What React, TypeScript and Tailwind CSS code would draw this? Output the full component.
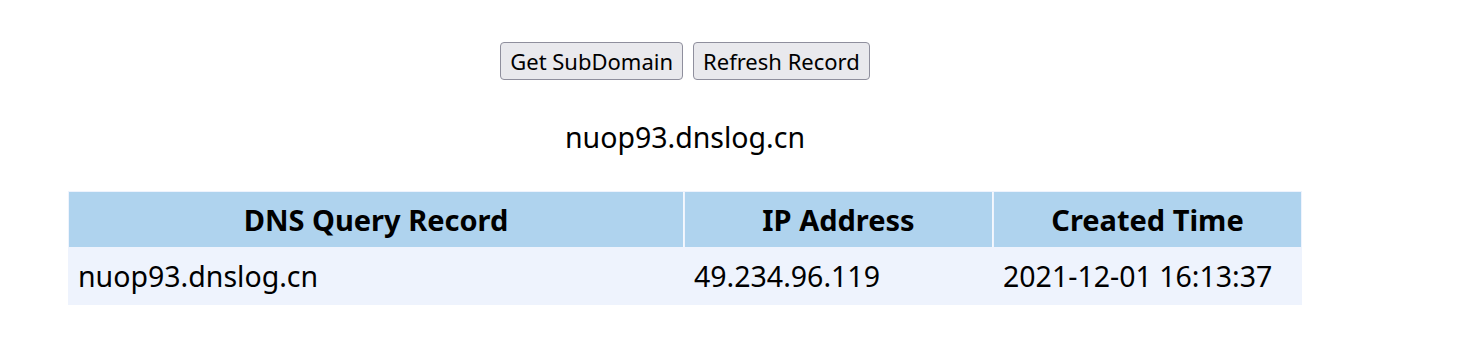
import React from "react";

export default function App() {
  const font = { fontFamily: '"Noto Sans", "Open Sans", sans-serif' };
  return (
    <div className="w-[1370px] bg-white text-black" style={font}>
      <div className="flex justify-center gap-[10px] pt-[42px]">
        <button className="h-[38px] px-[9px] rounded-[4px] border border-[#8f8f9d] bg-[#e9e9ed] text-[22px] leading-none text-black">
          Get SubDomain
        </button>
        <button className="h-[38px] px-[9px] rounded-[4px] border border-[#8f8f9d] bg-[#e9e9ed] text-[22px] leading-none text-black">
          Refresh Record
        </button>
      </div>
      <div className="mt-[37px] text-center text-[28.5px] leading-[40px]">nuop93.dnslog.cn</div>
      <div className="flex justify-center mt-[34px]">
        <table className="w-[1234px] border-separate border-spacing-[1px] bg-[#eef3fd] text-[28.5px]">
          <thead>
            <tr>
              <th className="h-[55px] bg-[#afd3ee] font-bold text-[29px] w-[615px] border-r border-[#f4f8fd]">DNS Query Record</th>
              <th className="h-[55px] bg-[#afd3ee] font-bold text-[29px] w-[308px] border-r border-[#f4f8fd]">IP Address</th>
              <th className="h-[55px] bg-[#afd3ee] font-bold text-[29px]">Created Time</th>
            </tr>
          </thead>
          <tbody>
            <tr>
              <td className="h-[56px] px-[9px] text-left">nuop93.dnslog.cn</td>
              <td className="h-[56px] px-[9px] text-left">49.234.96.119</td>
              <td className="h-[56px] px-[9px] text-left">2021-12-01 16:13:37</td>
            </tr>
          </tbody>
        </table>
      </div>
    </div>
  );
}
